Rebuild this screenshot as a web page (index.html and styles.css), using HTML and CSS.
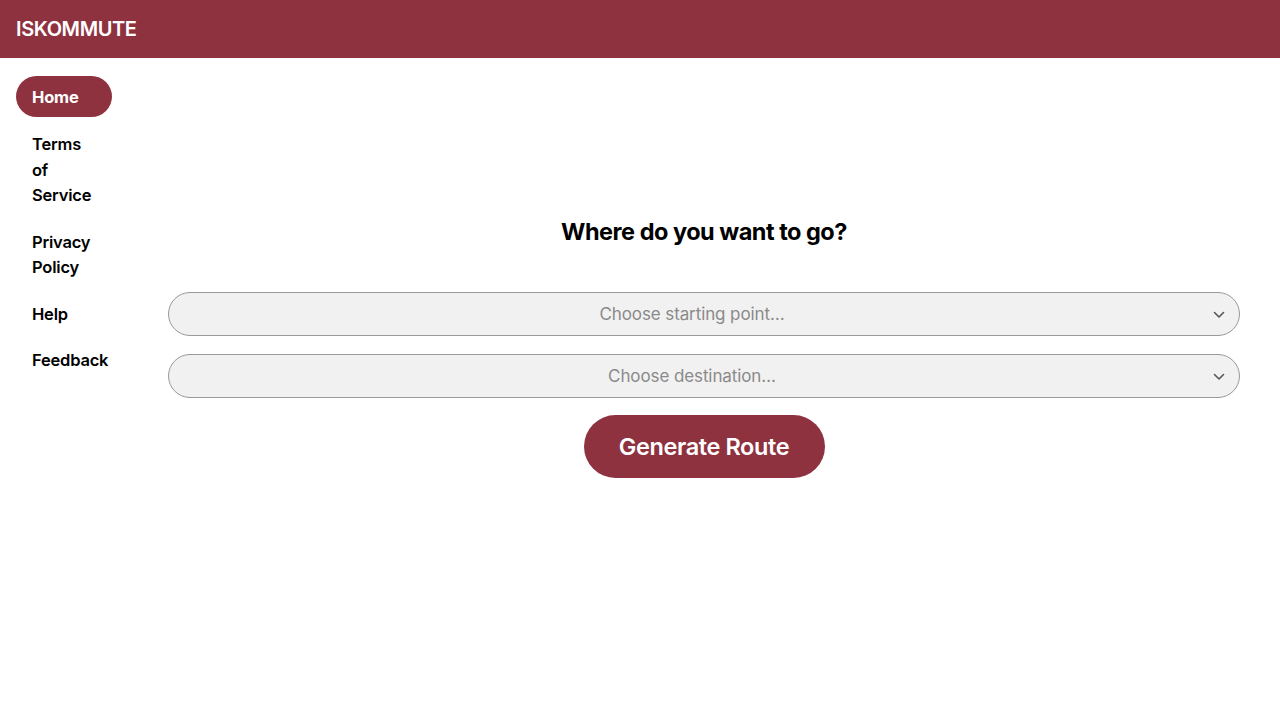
FILE: index.html
```html
<!DOCTYPE html>
<html lang="en">

<head>
    <meta charset="UTF-8">
    <meta name="viewport" content="width=device-width, initial-scale=1.0">
    <title>ISKOMMUTE</title>
    <link rel="stylesheet" href="styles.css">
</head>

<body>
    <header class="topbar">
        <div class="brand">ISKOMMUTE</div>
    </header>

    <div class="layout">
        <nav class="sidebar">
            <a class="nav-link active" href="#">Home</a>
            <a class="nav-link" href="#">Terms of Service</a>
            <a class="nav-link" href="#">Privacy Policy</a>
            <a class="nav-link" href="#">Help</a>
            <a class="nav-link" href="#">Feedback</a>
        </nav>

        <main class="content">
            <h1 class="question">Where do you want to go?</h1>

            <div class="picker">
                <span class="picker-text">Choose starting point…</span>
                <svg class="chevron" width="12" height="8" viewBox="0 0 12 8">
                    <path d="M1.5 1.5 L6 6 L10.5 1.5" fill="none" stroke="#555" stroke-width="1.6" stroke-linecap="round" stroke-linejoin="round"/>
                </svg>
            </div>
            <div class="picker">
                <span class="picker-text">Choose destination…</span>
                <svg class="chevron" width="12" height="8" viewBox="0 0 12 8">
                    <path d="M1.5 1.5 L6 6 L10.5 1.5" fill="none" stroke="#555" stroke-width="1.6" stroke-linecap="round" stroke-linejoin="round"/>
                </svg>
            </div>

            <button class="generate">Generate Route</button>
        </main>
    </div>
</body>

</html>
```

FILE: styles.css
```css
html {
    height: 100%;
}

body {
    margin: 0;
    height: 100%;
    font-family: Inter, "Noto Sans", sans-serif;
    color: #000;
    background-color: #fff;
}

.topbar {
    height: 58px;
    background-color: #8f3240;
    display: flex;
    align-items: center;
    padding: 0 16px;
}

.brand {
    color: #fff;
    font-size: 20px;
    font-weight: 600;
    letter-spacing: -0.4px;
}

.layout {
    display: flex;
}

.sidebar {
    width: 96px;
    padding: 18px 0 0 16px;
    display: flex;
    flex-direction: column;
    gap: 21px;
    flex-shrink: 0;
}

.nav-link {
    display: block;
    padding: 0 16px;
    color: #000;
    text-decoration: none;
    font-size: 16.5px;
    font-weight: 600;
    line-height: 25.5px;
    letter-spacing: -0.2px;
}

.nav-link.active {
    background-color: #8f3240;
    color: #fff;
    border-radius: 21px;
    height: 41px;
    line-height: 43px;
    margin-bottom: -6px;
    font-weight: 700;
}

.content {
    flex: 1;
    margin: 0 40px 0 56px;
    padding-top: 158px;
    display: flex;
    flex-direction: column;
    align-items: center;
}

.question {
    margin: 0 0 44px;
    font-size: 23.5px;
    font-weight: 700;
    letter-spacing: -0.5px;
    line-height: 32px;
}

.picker {
    position: relative;
    box-sizing: border-box;
    width: 100%;
    height: 44px;
    margin-bottom: 18px;
    padding-right: 24px;
    border: 1px solid #999;
    border-radius: 22px;
    background-color: #f1f1f1;
    display: flex;
    align-items: center;
    justify-content: center;
}

.picker:last-of-type {
    margin-bottom: 17px;
}

.picker-text {
    color: #8a8a8a;
    font-size: 17px;
    letter-spacing: -0.1px;
}

.chevron {
    position: absolute;
    right: 14px;
    top: 18px;
}

.generate {
    width: 241px;
    height: 63px;
    border: none;
    border-radius: 32px;
    background-color: #8f3240;
    color: #fff;
    font-family: inherit;
    font-size: 23.5px;
    font-weight: 600;
    letter-spacing: -0.4px;
    outline: none;
}
```
